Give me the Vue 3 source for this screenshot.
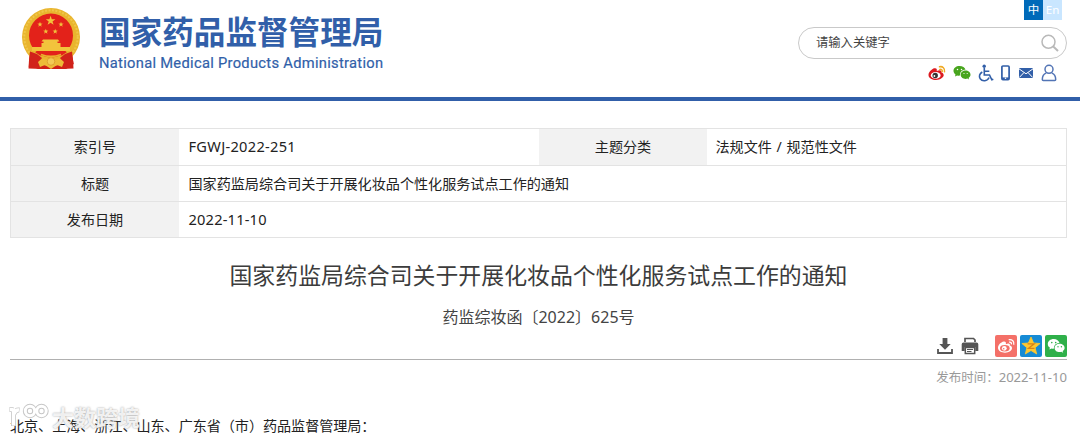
<script setup>
const rays = [
  { x: 40, y: 24.5, s: 0.55 },
  { x: 61, y: 24.5, s: 0.55 },
  { x: 45.8, y: 31.5, s: 0.55 },
  { x: 55.2, y: 31.5, s: 0.55 }
]
const star = 'M0 -5 L1.2 -1.6 L4.8 -1.5 L1.9 .6 L3 4 L0 2 L-3 4 L-1.9 .6 L-4.8 -1.5 L-1.2 -1.6Z'
</script>

<template>
  <div class="page">
    <header class="header">
      <div class="brand">
        <svg class="emblem" viewBox="21 7 60 64">
          <path d="M30 49 L28.800 67 L35 67.500 L38 69 L66 69 L68.500 67.500 L73.800 64 L71 49Z" fill="#cf1f16" />
          <circle cx="51" cy="37" r="29" fill="#e9b52e" />
          <circle cx="51" cy="37" r="26.700" fill="none" stroke="#f0c648" stroke-width="2" stroke-dasharray="2 1.500" />
          <circle cx="51" cy="35.500" r="22" fill="#e3221a" />
          <g fill="#f2c33c">
            <path :d="star" transform="translate(50.6 20.800)" />
            <path v-for="r in rays" :key="r.x" :d="star" :transform="`translate(${r.x} ${r.y}) scale(${r.s})`" />
            <path d="M43 39.500h15l1.500 2h-18zM43.500 41h14v2h-14zM41.500 43h19v4h-19zM32 47h38v4h-38z" />
          </g>
          <path d="M35 52h32l-5 3.500H40z" fill="#e3221a" />
          <path d="M30 51.500 L37 54 L42 58 L39 62 L42 69 L28.500 68.500 L29 60Z M72 51.500 L65 54 L60 58 L63 62 L60 69 L73.500 68.500 L73 60Z" fill="#d1221a" />
          <path d="M38 62 Q42 57 46 60 L51 57 L56 60 Q60 57 64 62 L62 67 L57 65 L51 69 L45 65 L40 67Z" fill="#edbb38" />
          <circle cx="51" cy="61.500" r="3.800" fill="#f3cb55" stroke="#d9982a" stroke-width=".8" />
          <path d="M41 54.500q10 4 20 0" stroke="#e9b52e" stroke-width="1.800" fill="none" />
        </svg>
        <div class="names">
          <div class="cn-name">国家药品监督管理局</div>
          <div class="en-name">National Medical Products Administration</div>
        </div>
      </div>
      <div class="tools">
        <div class="lang"><span class="on">中</span><span class="off">En</span></div>
        <div class="search">
          <span>请输入关键字</span>
          <svg width="19" height="19" viewBox="0 0 19 19" fill="none" stroke="#b9b9b9" stroke-width="1.500">
            <circle cx="8.500" cy="7.800" r="6.500" /><path d="M13 12.300L18 17" stroke-width="2" />
          </svg>
        </div>
        <div class="links">
          <svg width="18" height="16" viewBox="0 0 18 16">
            <path d="M6.300 3.300C3.800 4 .5 7 .5 10c0 3.200 4 5 7.500 5 4.500 0 7.700-2.500 7.700-4.900 0-1.600-1.300-2.400-2.200-2.700.5-2-1.500-2.800-4.800-1.400.5-1.700-.1-3.100-2.400-2.700z" fill="#dc1a20" />
            <ellipse cx="7.700" cy="10.400" rx="4.900" ry="3.300" fill="#fff" />
            <circle cx="7.200" cy="10.500" r="2.700" fill="#333" /><circle cx="6.400" cy="11" r=".9" fill="#fff" />
            <path d="M11.500 1.800c3-.8 5.700 1.500 5 5M11.800 4.400c1.500-.3 2.700.6 2.400 2.200" stroke="#f0aa25" stroke-width="1.500" fill="none" stroke-linecap="round" />
          </svg>
          <svg width="18" height="16" viewBox="0 0 18 16">
            <path d="M6.500 1C3 1 .5 3.100.5 5.800c0 1.600.8 2.800 2 3.700L2 11.500l2.200-1.100c1 .3 2 .3 3 .1C6.500 7.200 9 4.700 12.500 4.800 12 2.600 9.600 1 6.500 1z" fill="#48a51e" />
            <path d="M12.600 5.500c-2.800 0-4.900 1.900-4.900 4.200s2.100 4.200 4.900 4.200c.6 0 1.200-.1 1.800-.3l1.700 1-.5-1.700c1.100-.8 1.900-1.900 1.900-3.200 0-2.300-2.200-4.200-4.900-4.200z" fill="#48a51e" />
            <g fill="#fff"><circle cx="4.500" cy="4.400" r=".75" /><circle cx="8.500" cy="4.400" r=".75" /><circle cx="11" cy="8.500" r=".6" /><circle cx="14.200" cy="8.500" r=".6" /></g>
          </svg>
          <svg width="16" height="18" viewBox="0 0 16 18" fill="none" stroke="#325fa8" stroke-width="1.600">
            <circle cx="6.200" cy="2.200" r="1.700" fill="#325fa8" stroke="none" />
            <path d="M6.300 4v7h5.200l2.300 4.800 1.500-.6M6.300 7.200h5" /><path d="M4.300 8C1.500 9.500.7 12.500 2.200 14.700c2.200 3.200 7.200 2.700 8.900-1.200" />
          </svg>
          <svg width="11" height="16" viewBox="0 0 11 16"><rect x="1.900" y="1" width="7.200" height="13.600" rx="1" fill="#fff" stroke="#325fa8" stroke-width="1.700" /><path d="M2 12.400h7v2H2z" fill="#325fa8" /><circle cx="5.500" cy="13.200" r=".8" fill="#fff" /></svg>
          <svg width="16" height="12" viewBox="0 0 16 12"><rect x="1" y="1" width="14" height="10" rx=".6" fill="#325fa8" /><path d="M1 1.800l7 5 7-5M1.300 10.500l4.700-5M14.700 10.500l-4.700-5" stroke="#fff" fill="none" stroke-width="1" /></svg>
          <svg width="16" height="18" viewBox="0 0 16 18" fill="none" stroke="#5274b5" stroke-width="1.500"><circle cx="8" cy="5.300" r="4" /><path d="M5.200 9.100C2.800 10 1.300 12.200 1.300 15.500q0 .9 1 .9h11.400q1 0 1-.9c0-3.300-1.500-5.500-3.900-6.400" /></svg>
        </div>
      </div>
    </header>

    <main class="content">
      <div class="info">
        <div class="row four">
          <div class="th">索引号</div><div class="td"><span class="lat code">FGWJ-2022-251</span></div>
          <div class="th">主题分类</div><div class="td topic">法规文件 / 规范性文件</div>
        </div>
        <div class="row"><div class="th">标题</div><div class="td">国家药监局综合司关于开展化妆品个性化服务试点工作的通知</div></div>
        <div class="row"><div class="th">发布日期</div><div class="td"><span class="lat">2022-11-10</span></div></div>
      </div>
      <h1>国家药监局综合司关于开展化妆品个性化服务试点工作的通知</h1>
      <div class="docno">药监综妆函〔<span class="num">2022</span>〕<span class="num">625</span>号</div>
      <div class="actions">
        <svg class="down" width="18" height="18" viewBox="0 0 18 18"><path d="M6.600 1h4.800v6h3.300L9 12.800 3.300 7h3.300z" fill="#555" /><path d="M2 12v4h14v-4" fill="none" stroke="#555" stroke-width="1.800" /></svg>
        <svg class="print" width="18" height="18" viewBox="0 0 18 18"><path d="M4 5V1.500h8.500L14 3v2" fill="none" stroke="#555" stroke-width="1.700" /><path d="M2.500 5.500h13q1.800 0 1.800 1.800V14h-3v-4H3.700v4h-3V7.300q0-1.800 1.800-1.800z" fill="#555" /><path d="M4.300 10.500h9.400v6H4.300z" fill="#fff" stroke="#555" stroke-width="1.500" /><path d="M6 12.500h6M6 14.500h4.500" stroke="#555" /></svg>
        <svg class="share" viewBox="0 0 22 22">
          <rect width="22" height="22" rx="2" fill="#f47068" />
          <path d="M8.700 6.500C5.800 7.200 3 10 3 12.800 3 16 6.500 17.700 10 17.700c4.200 0 7-2.300 7-4.700 0-1.500-1.200-2.200-2.200-2.500.5-1.800-1-2.500-4-1.300.5-1.600-.1-3-2.100-2.700z" fill="#fff" />
          <ellipse cx="9.800" cy="13.200" rx="4.800" ry="3.300" fill="#f47068" /><circle cx="9.300" cy="13.300" r="2.400" fill="#fff" /><circle cx="8.700" cy="13.800" r=".8" fill="#f47068" />
          <path d="M13.700 4.700c3.300-.8 6 1.800 5 5.100M14 7.100c1.700-.3 2.700.7 2.400 2.300" fill="none" stroke="#fff" stroke-width="1.300" />
        </svg>
        <svg class="share" viewBox="0 0 22 22">
          <rect width="22" height="22" rx="2" fill="#168bd5" />
          <path d="M11 2l2.600 6 6.500.5-5 4.200 1.600 6.300-5.700-3.500L5.300 19l1.600-6.300-5-4.200L8.400 8z" fill="#ffc82f" stroke="#ffc82f" stroke-width=".8" stroke-linejoin="round" />
          <path d="M7.500 8.800h6.700L8.500 13.300h6" fill="none" stroke="#d98318" stroke-width="1.300" />
        </svg>
        <svg class="share" viewBox="0 0 22 22">
          <rect width="22" height="22" rx="2" fill="#2fb04a" />
          <path d="M8.800 4C5.300 4 2.800 6.200 2.800 8.900c0 1.600.8 2.900 2.100 3.700l-.5 1.900 2.200-1.100c.8.2 1.600.3 2.400.2C8.600 10.400 11 8 14.500 8 14 5.700 11.700 4 8.800 4z" fill="#fff" />
          <path d="M14.600 8.700c-2.900 0-5 1.900-5 4.200s2.100 4.200 5 4.200c.6 0 1.200-.1 1.700-.3l1.900 1-.6-1.700c1.200-.8 2-1.900 2-3.200 0-2.300-2.200-4.200-5-4.200z" fill="#fff" />
          <g fill="#2fb04a"><circle cx="6.800" cy="7.600" r=".8" /><circle cx="10.700" cy="7.600" r=".8" /><circle cx="13" cy="11.700" r=".7" /><circle cx="16.400" cy="11.700" r=".7" /></g>
        </svg>
      </div>
      <div class="time">发布时间：<span>2022-11-10</span></div>
      <p class="body">北京、上海、浙江、山东、广东省（市）药品监督管理局：</p>
    </main>

    <div class="mark">
      <svg width="41" height="28" viewBox="0 0 41 28" fill="none">
        <g stroke="#c6c6c6" stroke-width="5"><path d="M5.500 24V7M1.500 7.500h4M6 12q1.500-4.500 5.500-4" /><circle cx="22" cy="9" r="4.700" /><circle cx="33.500" cy="9" r="4.700" /></g>
        <g stroke="#fff" stroke-width="3.400"><path d="M5.500 23.500V6.500M2 7.500h3M6 12q1.500-4.500 5-4" /></g>
        <g stroke="#fff" stroke-width="3"><circle cx="22" cy="9" r="4.700" /><circle cx="33.500" cy="9" r="4.700" /></g>
      </svg>
      <span>大数跨境</span>
    </div>
  </div>
</template>

<style>
body { margin: 0; background: #fff; overflow: hidden; }
</style>
<style scoped>
.page { position: relative; width: 1080px; height: 438px; overflow: hidden; background: #fff; color: #222; font-family: "Noto Sans", "Noto Sans CJK SC", sans-serif; font-size: 14.1px; }
.header { height: 97px; border-bottom: 4px solid #315fa9; display: flex; justify-content: space-between; }
.brand { display: flex; padding: 7px 0 0 21px; }
.emblem { width: 60px; height: 64px; }
.names { margin: 0 0 0 18px; color: #315fa9; white-space: nowrap; }
.cn-name { font: 700 31.6px/46px "Noto Sans CJK SC", sans-serif; }
.en-name { margin-top: 2px; font: 400 14.7px/16px Roboto, sans-serif; letter-spacing: .3px; -webkit-text-stroke: .2px #315fa9; }
.tools { width: 269px; margin-right: 13px; display: flex; flex-direction: column; align-items: flex-end; }
.lang { display: flex; margin-right: 5px; height: 20px; font-size: 11.5px; line-height: 20px; text-align: center; color: #fff; }
.lang span { width: 19px; }
.on { background: #006ab9; }
.off { background: #c9e6ff; }
.search { box-sizing: border-box; width: 269px; height: 32px; margin-top: 7px; padding: 0 7px 0 17px; border: 1px solid #c9c9c9; border-radius: 16px; display: flex; justify-content: space-between; align-items: center; font-size: 12.3px; color: #444; }
.search span { margin-top: -2px; }
.links { display: flex; align-items: center; height: 18px; margin: 5px 10px 0 0; width: 129px; justify-content: space-between; }
.content { padding: 27px 13px 0 10px; }
.info { box-sizing: border-box; height: 110px; border: 1px solid #e3e3e3; display: grid; grid-template-rows: 36px 36px 36px; }
.row { box-sizing: border-box; display: grid; grid-template-columns: 168px 1fr; line-height: 35px; overflow: hidden; }
.row.four { grid-template-columns: 168px 360px 168px 1fr; line-height: 36px; }
.row + .row { border-top: 1px solid #e3e3e3; }
.th { background: #f2f2f2; text-align: center; }
.td { padding-left: 9.5px; }
.topic { padding-left: 8.5px; word-spacing: 1px; }
.lat { display: block; font-size: 14.6px; letter-spacing: .2px; }
.code { margin-top: -1px; letter-spacing: .3px; }
h1 { margin: 20px 0 0; text-align: center; font-size: 22.9px; line-height: 36px; font-weight: 400; color: #3c3c3c; }
.docno { margin-top: 11px; text-align: center; font-size: 16px; line-height: 24px; color: #444; }
.actions { display: flex; height: 30px; border-bottom: 1px solid #b0b0b0; box-sizing: border-box; margin-top: 1px; padding-top: 5px; justify-content: flex-end; }
.share { width: 22px; height: 22px; margin-left: 3px; }
.down { margin: 2px 7px 0 0; }
.print { margin: 2px 13px 0 0; }
.time { text-align: right; margin-top: 6px; line-height: 22px; font-size: 12.5px; color: #999; }
.time span { font-size: 13.1px; }
.body { margin: 25px 0 0; line-height: 24px; letter-spacing: -.04px; }
.mark { position: absolute; left: 8px; top: 402px; display: flex; }
.mark span { margin-left: 3px; font: 700 22px/28px "Noto Sans CJK SC", sans-serif; color: rgba(255,255,255,.85); text-shadow: 0 0 2px #999; }
</style>
